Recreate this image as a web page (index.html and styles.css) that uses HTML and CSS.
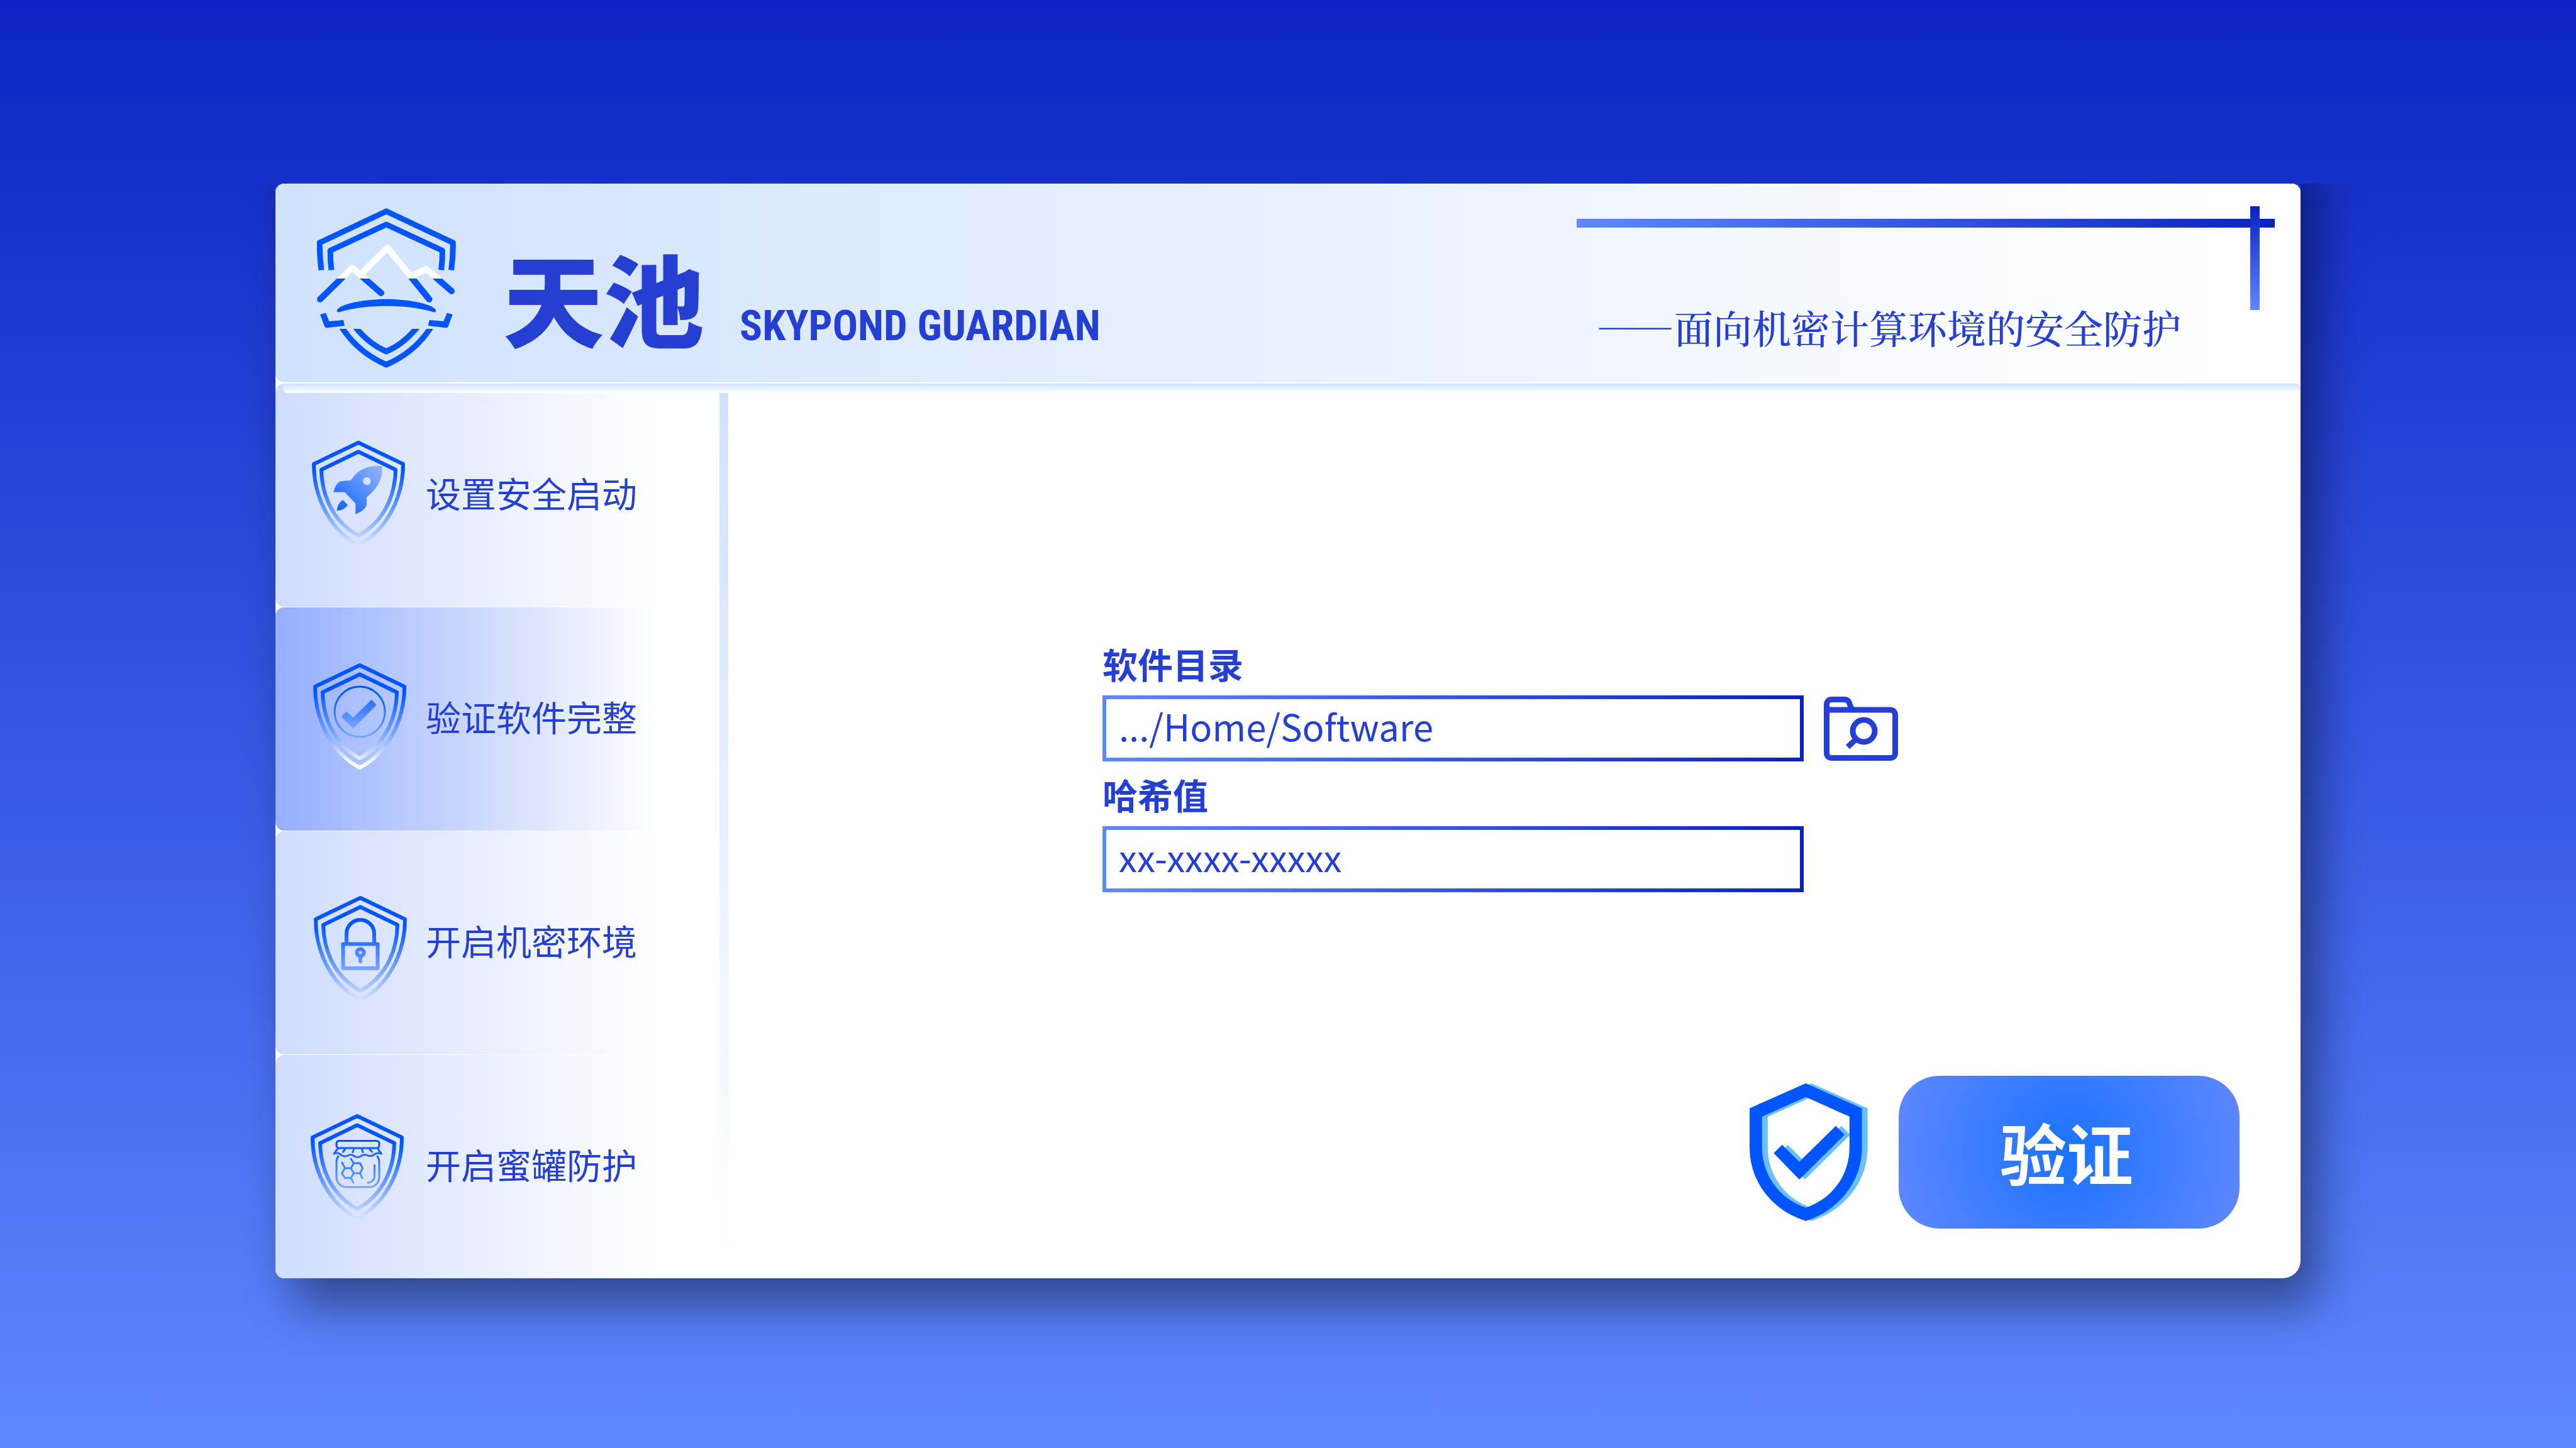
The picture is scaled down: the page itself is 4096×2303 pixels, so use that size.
FILE: index.html
```html
<!DOCTYPE html>
<html lang="zh-CN">
<head>
<meta charset="utf-8">
<meta name="viewport" content="width=device-width, initial-scale=1">
<title>天池 SKYPOND GUARDIAN</title>
<link rel="stylesheet" href="styles.css">
</head>
<body>
<svg class="defs" aria-hidden="true">
  <defs>
    <linearGradient id="fade" gradientUnits="userSpaceOnUse" x1="0" y1="0" x2="0" y2="170">
      <stop offset="0.28" stop-color="#0055ff"/>
      <stop offset="0.66" stop-color="#6e9eff"/>
      <stop offset="1" stop-color="#dde7ff"/>
    </linearGradient>
    <linearGradient id="fade-white" gradientUnits="userSpaceOnUse" x1="0" y1="0" x2="0" y2="170">
      <stop offset="0.28" stop-color="#0055ff"/>
      <stop offset="0.7" stop-color="#86adff"/>
      <stop offset="0.95" stop-color="#ffffff"/>
    </linearGradient>
    <linearGradient id="rocket" gradientUnits="userSpaceOnUse" x1="40" y1="112" x2="112" y2="42">
      <stop offset="0" stop-color="#1263ff"/>
      <stop offset="1" stop-color="#94b6ff"/>
    </linearGradient>
    <linearGradient id="tick" gradientUnits="userSpaceOnUse" x1="0" y1="58" x2="0" y2="106">
      <stop offset="0" stop-color="#236eff"/>
      <stop offset="1" stop-color="#7ea7ff"/>
    </linearGradient>
    <linearGradient id="snow" gradientUnits="userSpaceOnUse" x1="0" y1="0" x2="0" y2="224">
      <stop offset="0.5" stop-color="#ffffff"/>
      <stop offset="0.5" stop-color="#0055ff"/>
    </linearGradient>
    <clipPath id="lower"><rect x="0" y="192" width="221" height="70"/></clipPath>
    <g id="shield">
      <path d="M74 4 L3 38 C3 95 32 145 74 167 C116 145 145 95 145 38 Z"/>
      <path d="M74 18.500 L15 47 C16 95 38 132 74 152 C110 132 132 95 133 47 Z"/>
    </g>
    <g id="badge">
      <path fill-rule="evenodd" d="M89.300 0 L178.600 39.700 V102 C178.600 158 140 203 89.300 218.700 C38 203 0 158 0 102 V39.700 Z M89.300 21.700 L19.800 53 V102 C19.800 148 50 185 89.300 197.700 C129 185 158.800 148 158.800 102 V53 Z"/>
      <path d="M38.300 111 L51.700 97.700 L79 124.700 L137 67.700 L151 81.700 L79 153 Z"/>
    </g>
  </defs>
</svg>

<main class="card">
  <header class="header">
    <svg class="logo" viewBox="0 0 221 255" aria-hidden="true">
      <g fill="none" stroke="#0055ff" stroke-width="9" stroke-linejoin="round">
        <path d="M7 98.500 Q4 76 4.300 55 L110.300 5 L216.300 55 Q216.600 76 213.600 98.500"/>
        <path d="M23 98.500 Q21 82 21.200 67.500 L110.300 26 L199.400 67.500 Q199.600 82 197.600 98.500"/>
        <g clip-path="url(#lower)">
          <path d="M36 184 Q62 228 110.300 249 Q158.600 228 184.600 184"/>
          <path d="M57 184 Q80 215 110.300 228 Q140.600 215 163.600 184"/>
        </g>
      </g>
      <g fill="none" stroke="url(#snow)" stroke-width="10" stroke-linejoin="round" stroke-linecap="round">
        <path d="M5 145 L56 95 L102 135"/>
        <path d="M150 108 L174 97 L214 132"/>
        <path d="M71 104 L112 63 L178.500 145"/>
      </g>
      <g fill="#0055ff">
        <path d="M32 162 C38 151 80 144.700 110.300 144.700 C140 144.700 183 151 189 162 C190 165 187 166 185 165.300 C160 158 135 155.700 110.300 155.700 C86 155.700 61 158 36 165.300 C33 166 31 165 32 162 Z"/>
        <path d="M5 169 L14 166.700 L19.500 180 L42 178 L44 187 L17 190.300 Q13 191 12 188 Z"/>
        <path d="M215.700 169 L206.700 166.700 L201.200 180 L178.700 178 L176.700 187 L203.700 190.300 Q207.700 191 208.700 188 Z"/>
      </g>
    </svg>
    <div class="heading">
      <h1 class="title">天池</h1>
      <p class="subtitle">SKYPOND GUARDIAN</p>
      <p class="tagline">——面向机密计算环境的安全防护</p>
    </div>
  </header>

  <div class="body">
    <nav class="sidebar">
      <a class="item" href="#boot">
        <svg class="item-icon" viewBox="-8 -8 168 192" aria-hidden="true">
          <use href="#shield" class="outline"/>
          <path fill="url(#rocket)" fill-rule="evenodd" d="M111.500 41 V51 C110 68 99 81 87 91 V102 C86 109 79 114 69.300 117.700 V100.700 L52 82.700 H34.500 C36 74 41 65 49 65 L62 64 C71 50 84 41 103 41 Z M87.300 59 A6.200 6.200 0 1 0 87.400 59 Z M49 95 L57 103 C53 109 47 112 39.700 112.300 C40 106 43 99 49 95 Z"/>
        </svg>
        <span class="item-text">设置安全启动</span>
      </a>
      <a class="item item-active" href="#verify" aria-current="page">
        <svg class="item-icon" viewBox="-10 -6 168 192" aria-hidden="true">
          <use href="#shield" class="outline outline-white"/>
          <circle cx="74" cy="78" r="40" class="outline thin"/>
          <path fill="url(#tick)" d="M44.600 86 L52.800 77.700 L63.500 87.300 L93 58.700 L100.800 67.300 L63.500 105 Z"/>
        </svg>
        <span class="item-text">验证软件完整</span>
      </a>
      <a class="item" href="#enclave">
        <svg class="item-icon" viewBox="-11 -20 168 192" aria-hidden="true">
          <use href="#shield" class="outline"/>
          <g class="outline">
            <path d="M52 77 V61 A22 22 0 0 1 96 61 V77"/>
            <rect x="46.500" y="77.500" width="55" height="38.500"/>
            <circle cx="74" cy="91" r="5.500"/>
            <path d="M74 97 V105" stroke-linecap="round"/>
          </g>
        </svg>
        <span class="item-text">开启机密环境</span>
      </a>
      <a class="item" href="#honeypot">
        <svg class="item-icon" viewBox="-6 -11 168 192" aria-hidden="true">
          <use href="#shield" class="outline"/>
          <g class="outline thin" stroke-linecap="round">
            <rect x="41" y="43.500" width="68" height="11.500" rx="4"/>
            <path d="M43 56 Q40 60 37 64 Q42 62 46 64 Q52 70 59 67 Q64 64 68 67 Q74 72 81 67 Q86 64 91 67 Q97 69 103 64 Q108 62 112.500 64 Q109 60 107 56"/>
            <path d="M54.500 57 L51.500 61 M68.500 57 L67 61.500 M81.500 57 L83 61.500 M94 57 L97.500 61"/>
            <path d="M44 68 Q41 72 41 77 V101 C41 110 48 117 57 117 H93 C102 117 109 110 109 101 V77 Q109 72 106 68"/>
            <path d="M101.500 82 V100 Q101 109 91 110"/>
            <path d="M64 72 L68.500 79 H78.500 L82.500 87 L78.500 95 H68.500 L64 87 L68.500 79 M78.500 95 L82 103 M64 87 H54.500 L50 78 M54.500 87 L49.500 95 L54.500 102.500 H64 L68.500 95 M64 102.500 L68 110"/>
          </g>
        </svg>
        <span class="item-text">开启蜜罐防护</span>
      </a>
    </nav>
    <div class="divider"></div>
    <section class="content">
      <form class="form" id="verify-form">
        <label class="label" for="dir">软件目录</label>
        <div class="row">
          <input class="field" id="dir" type="text" value=".../Home/Software">
          <button class="browse" type="button" aria-label="浏览目录">
            <svg viewBox="0 0 118 102" aria-hidden="true">
              <g fill="none" stroke="#243fd2" stroke-width="9">
                <path d="M4.500 22 V13 Q4.500 4.500 13 4.500 H33 Q38 4.500 40 9 L45 22"/>
                <path d="M4.500 21 H105 Q113.500 21 113.500 30 V89 Q113.500 97.500 105 97.500 H13 Q4.500 97.500 4.500 89 Z"/>
                <circle cx="63.500" cy="54.500" r="17.500"/>
                <path d="M52 67 L38 80"/>
              </g>
            </svg>
          </button>
        </div>
        <label class="label" for="hash">哈希值</label>
        <div class="row">
          <input class="field" id="hash" type="text" value="xx-xxxx-xxxxx">
        </div>
      </form>
      <div class="actions">
        <svg class="actions-icon" viewBox="0 0 188 219" aria-hidden="true">
          <use href="#badge" x="9" fill="#6abfff"/>
          <use href="#badge" fill="#0055ff"/>
        </svg>
        <button class="submit" type="submit" form="verify-form">验证</button>
      </div>
    </section>
  </div>
</main>
</body>
</html>
```
FILE: styles.css
```css
* {
  box-sizing: border-box;
}

body {
  margin: 0;
  min-height: 100vh;
  padding: 292px 438px 270px;
  background: linear-gradient(#0b24c3, #5e88ff);
  color: #243fd2;
  font-family: "Noto Sans CJK SC", sans-serif;
}

h1,
p {
  margin: 0;
}

button {
  border: 0;
  padding: 0;
  font-family: inherit;
  cursor: pointer;
}

.defs {
  position: absolute;
  width: 0;
  height: 0;
}

.card {
  position: relative;
  display: flex;
  flex-direction: column;
  gap: 2px;
  background: #fff;
  border-radius: 14px 14px 28px 14px;
  clip-path: inset(0 -200px -240px -200px);
}

/* the shadow starts above the card and is cut off at its top edge */
.card::before {
  content: "";
  position: absolute;
  inset: -80px 0 0;
  z-index: -1;
  border-radius: 14px 14px 28px 14px;
  box-shadow: 28px 44px 76px rgba(0, 0, 0, 0.42);
}

/* header */

.header {
  position: relative;
  display: flex;
  align-items: flex-start;
  gap: 75px;
  min-height: 316px;
  padding: 39px 190px 0 66px;
  border-radius: 14px;
  background: linear-gradient(90deg, #d0e2ff, #fff 97%);
}

.header::before,
.header::after {
  content: "";
  position: absolute;
}

.header::before {
  top: 56px;
  right: 41px;
  width: 1110px;
  height: 14px;
  background: linear-gradient(90deg, #5e88ff, #0a22c1);
}

.header::after {
  top: 36px;
  right: 65px;
  width: 15px;
  height: 165px;
  background: linear-gradient(#0a22c1, #5e88ff);
}

.logo {
  flex: none;
  width: 221px;
  height: 255px;
}

.heading {
  flex: 1;
  display: flex;
  align-items: baseline;
  gap: 56px;
  padding-top: 60px;
  white-space: nowrap;
}

.title {
  font-size: 160px;
  line-height: 160px;
  font-weight: 900;
}

.subtitle {
  font-family: "Liberation Sans Narrow", "Roboto Condensed", Roboto, sans-serif;
  font-size: 67px;
  line-height: 67px;
  font-weight: 700;
}

.tagline {
  margin-left: auto;
  align-self: flex-end;
  font-family: "Noto Serif CJK SC", "Noto Sans CJK SC", serif;
  font-size: 62px;
  line-height: 62px;
  font-weight: 500;
}

/* body */

.body {
  position: relative;
  display: flex;
}

.body::before {
  content: "";
  position: absolute;
  top: 0;
  left: 12px;
  right: 0;
  height: 15px;
  border-radius: 7px;
  background: linear-gradient(#d0e2ff, #fff);
}

.sidebar {
  flex: none;
  display: flex;
  flex-direction: column;
  gap: 1px;
  width: 706px;
}

.item {
  display: flex;
  align-items: center;
  gap: 21px;
  height: 355px;
  padding-left: 50px;
  border-radius: 14px;
  background: linear-gradient(90deg, #cfdcff, #fff 86%);
  color: inherit;
  font-size: 56px;
  line-height: 56px;
  text-decoration: none;
  white-space: nowrap;
}

.item-active {
  background: linear-gradient(90deg, #94afff, #fff 86%);
}

.item-icon {
  flex: none;
  width: 168px;
  height: 192px;
}

.item-text {
  padding-bottom: 10px;
}

.outline {
  fill: none;
  stroke: url(#fade);
  stroke-width: 6px;
  stroke-linejoin: round;
}

.outline-white {
  stroke: url(#fade-white);
}

.thin {
  stroke-width: 3px;
}

.divider {
  flex: none;
  width: 14px;
  margin: 14px 0 20px;
  background: linear-gradient(#d0e2ff, #fff);
}

.content {
  flex: 1;
  display: flex;
  flex-direction: column;
  justify-content: space-between;
  padding: 417px 97px 79px 595px;
}

.form {
  display: flex;
  flex-direction: column;
}

.label {
  font-size: 56px;
  line-height: 56px;
  font-weight: 700;
}

.row {
  display: flex;
  align-items: center;
  gap: 32px;
  margin: 23px 0 24px;
}

.field {
  width: 1115px;
  height: 105px;
  padding: 0 20px 10px;
  border: 6px solid;
  border-image: linear-gradient(90deg, #5e88ff, #0a22c1) 1;
  background: #fff;
  color: inherit;
  font-family: inherit;
  font-size: 58px;
  line-height: 76px;
  outline: 0;
}

.browse {
  width: 118px;
  height: 102px;
  background: none;
}

.browse svg {
  display: block;
}

.actions {
  display: flex;
  align-items: center;
  justify-content: flex-end;
  gap: 49px;
}

.actions-icon {
  width: 188px;
  height: 219px;
}

.submit {
  width: 542px;
  height: 243px;
  padding: 0 8px 4px 0;
  border-radius: 65px;
  background: radial-gradient(circle, #1a73ff, #5c86ff 280px);
  color: #fff;
  font-size: 106px;
  font-weight: 700;
}
```
